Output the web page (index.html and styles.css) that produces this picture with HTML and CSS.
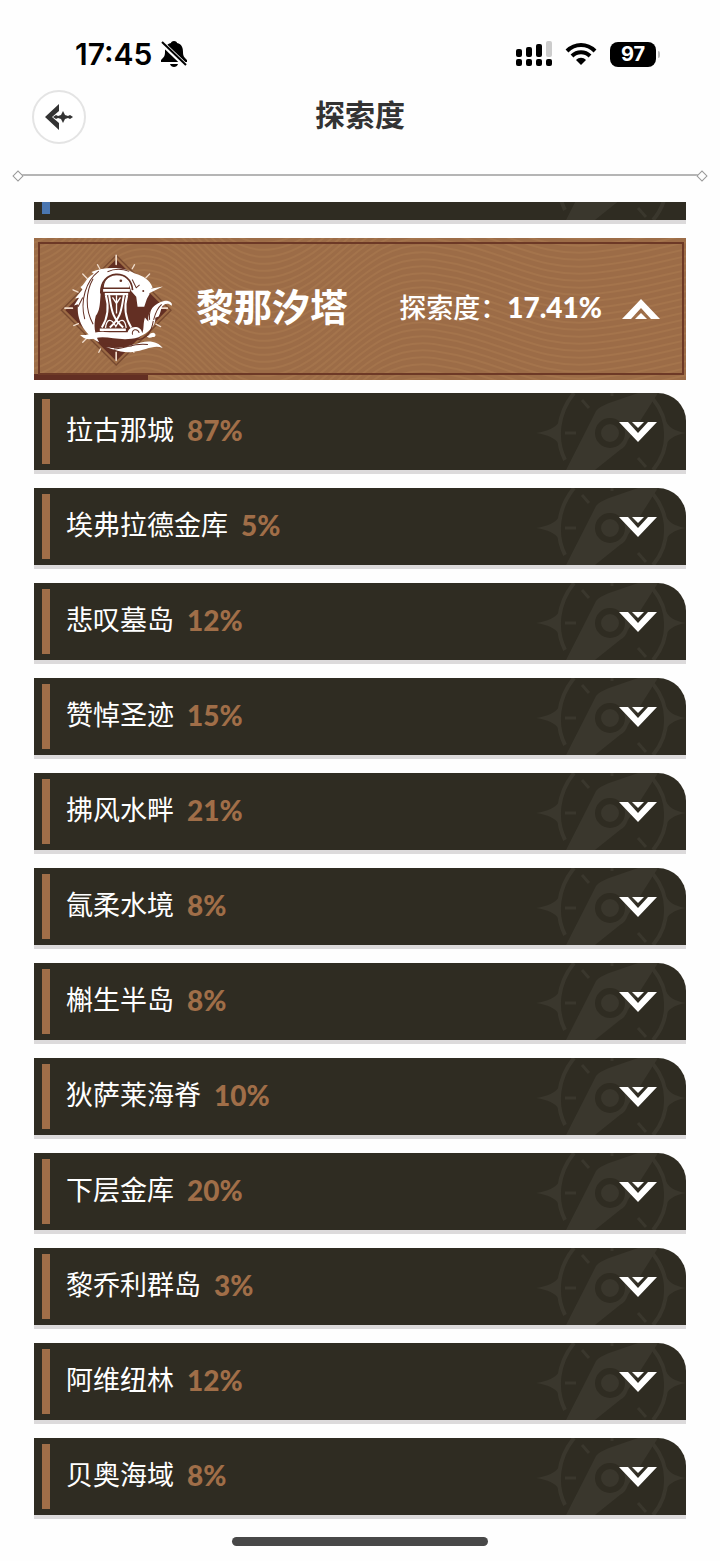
FILE: index.html
```html
<!DOCTYPE html>
<html lang="zh-CN">
<head>
    <meta charset="UTF-8">
    <meta name="viewport" content="width=device-width, initial-scale=1.0">
    <title>探索度</title>
    <link rel="stylesheet" href="styles.css">
</head>
<body>
<!-- shared shapes -->
<svg class="sprite" aria-hidden="true">
    <symbol id="compass" viewBox="0 0 152 77">
        <g fill="none" stroke="#3a372d" stroke-width="4">
            <path d="M31 67C21 47 23 21 40 0M119 77C137 56 136 27 119 6"/>
            <path d="M48 7l7 8M31 40h11M104 65l8 9M78 0v3" stroke-width="3"/>
        </g>
        <path fill="#3a372d" d="M2 40c12-2 19-5 23-11v22C21 45 14 42 2 40zM152 40c-12-2-18-6-22-15v30c4-9 10-13 22-15z"/>
        <path fill="#3a372d" d="M61 20c2-5 7-7 14-10l29-10h20L94 47c-2 5-4 8-8 10L61 77H32z"/>
        <circle cx="76" cy="40" r="12" fill="none" stroke="#2f2c22" stroke-width="6"/>
    </symbol>
    <symbol id="arrow" viewBox="0 0 38 20">
        <path d="M0 0h9l10 11L29 0h9L19 20z"/>
        <path d="M13 0h12l-6 6z"/>
    </symbol>
</svg>

<div class="status-bar">
    <div class="status-left">
        <span class="time">17:45</span>
        <svg width="26" height="28" viewBox="0 0 26 28">
            <path d="M13 1c-2 0-3 1-3 2-5 1-6 5-6 9 0 4-1 5-4 8v2h26v-2c-3-3-4-4-4-8 0-4-1-8-6-9 0-1-1-2-3-2zM9 24h8c-1 4-7 4-8 0z"/>
            <path d="M0 2l25 24" stroke="#fefefe" stroke-width="5"/>
            <path d="M1 2l24 23" stroke="#000" stroke-width="2"/>
        </svg>
    </div>
    <div class="status-right">
        <svg width="36" height="26" viewBox="0 0 36 26">
            <rect x="0" y="8" width="6" height="8" rx="2"/>
            <rect x="10" y="6" width="6" height="10" rx="2"/>
            <rect x="20" y="3" width="6" height="13" rx="2"/>
            <rect x="30" y="0" width="6" height="16" rx="2" fill="#ccc"/>
            <rect x="0" y="18" width="6" height="7" rx="2"/>
            <rect x="10" y="18" width="6" height="7" rx="2"/>
            <rect x="20" y="18" width="6" height="7" rx="2"/>
            <rect x="30" y="18" width="6" height="7" rx="2"/>
        </svg>
        <svg width="32" height="24" viewBox="0 0 32 24">
            <g fill="none" stroke="#000" stroke-width="4">
                <path d="M2 9c8-8 20-8 28 0"/>
                <path d="M7 14c5-5 13-5 18 0"/>
            </g>
            <path d="M11 18c3-3 7-3 10 0l-5 5z"/>
        </svg>
        <span class="battery">97</span>
    </div>
</div>

<header class="page-header">
    <button class="back" type="button" aria-label="返回">
        <svg width="28" height="28" viewBox="0 0 28 28">
            <path d="M14 1v7l-7 6 7 6v7L0 14z"/>
            <path d="M8 14l3-2 2 1 3-1 2-4 2 4 3 1 2-1 3 2-3 2-2-1-3 1-2 4-2-4-3-1-2 1z"/>
        </svg>
    </button>
    <h1>探索度</h1>
</header>

<div class="divider"></div>

<main class="list">
    <div class="clip">
        <div class="area area-blue"><svg class="compass"><use href="#compass"/></svg></div>
    </div>

    <button class="region" type="button">
        <!-- contour lines -->
        <svg class="contours" viewBox="0 0 652 142" preserveAspectRatio="none">
            <defs>
                <path id="c1" d="M-10 0C50-10 60-80 110-80S180 0 240-10 330-100 400-90 500-50 560-56 630-70 670-76"/>
                <g id="c4"><use href="#c1"/><use href="#c1" y="7"/><use href="#c1" y="14"/><use href="#c1" y="21"/></g>
                <g id="c16"><use href="#c4"/><use href="#c4" y="28"/><use href="#c4" y="56"/><use href="#c4" y="84"/></g>
            </defs>
            <use href="#c16" y="-28"/><use href="#c16" y="84"/><use href="#c16" y="196"/>
        </svg>
        <svg class="emblem" viewBox="110 185 350 350">
            <path d="M287 198l164 164-164 164-164-164z" fill="#9c6b45" stroke="#784a30" stroke-width="4"/>
            <path d="M287 210l152 152-152 152-152-152z" fill="#632f23"/>
            <g stroke="#f0dccb" stroke-width="5" stroke-linecap="round">
                <path d="M287 198v27M287 488v24M134 356h22M418 356h22"/>
                <path d="M231 226l7 12M342 226l-7 12M187 254l13 13M387 254l-11 11M158 301l15 7M160 408l14-6M187 458l12-12M235 488l5-10M340 488l-6-11M406 404l14 7" stroke-width="4"/>
            </g>
            <g fill="#fff">
                <path d="M236 458c-46-24-69-71-63-114l-12 4 15-23-12 2 22-27-6-7c14-8 14-26 40-40l-7-5c38-17 95-17 130 4 26 7 45 20 53 42l-12 10 3 10-8 14-8 24h-20l-4-30-16-18c-7-34-28-50-51-45-28 4-39 29-40 61-2 26-2 43-14 59-7 28-4 54 10 79z"/>
                <path d="M378 300l49-9-43 21z"/>
                <path d="M250 294c0-49 76-49 76 0z"/>
                <path d="M248 299h80v8h-80zM253 311h70v6h-70zM238 417h78v7h-78zM232 428h92v12h-92z"/>
                <path d="M322 438c-8-28 39-37 43-7 6-16 2-28 8-47l10 12c-3-33 21-57 50-62 18 0 23 8 20 15-10-10-20-7-26 0-8 8-5 19-13 32l-10 4c3 24-23 47-50 58-52 16-93-7-130 3-22 7-37-1-45-10 28 4 43-12 73-9 25 2 48 16 70 4z"/>
                <path d="M249 470c50 17 99-13 134-14 20 0 34 7 43 19-27-11-52 8-89 12-41 4-63-11-88-17z"/>
                <path d="M378 440c9 0 9-12 22-10 10 5 2 15-4 12-6 3-11 4-18-2z"/>
            </g>
            <g fill="none" stroke="#fff" stroke-width="6">
                <path d="M256 317c10 35 8 65-12 97M266 317c8 42 6 65 42 97M320 317c-10 35-8 65 12 97M310 317c-8 42-6 65-42 97"/>
                <path d="M255 415c4-29 18-29 31-4 13-25 27-25 31 4M276 324l12 18 12-18M288 317v55" stroke-width="4"/>
            </g>
            <g fill="none" stroke="#632f23" stroke-width="3">
                <path d="M235 245c-38 29-57 88-42 144M218 268c-22 38-25 91 0 136M326 246c-23-9-46-8-65 1M335 270l12 25 10-9M187 324l-14 28M356 430c-5-16-25-10-20 5M343 451c39 0 50-27 55-57M401 344c-17 17-16 33-14 47M423 345c-14 12-19 27-24 46M250 463c39 0 49 12 84 6M280 478c36 0 60-20 102-13"/>
                <path d="M241 312c-3-72 91-77 95-10" stroke-width="5"/>
            </g>
            <circle cx="301" cy="274" r="4" fill="#632f23"/>
            <circle cx="368" cy="305" r="3" fill="#632f23"/>
        </svg>
        <span class="region-name">黎那汐塔</span>
        <span class="region-rate">探索度：<b>17.41%</b></span>
        <svg class="arrow arrow-up"><use href="#arrow"/></svg>
        <span class="progress" style="width: 17.41%"></span>
    </button>

    <button class="area" type="button"><svg class="compass"><use href="#compass"/></svg><span>拉古那城</span><b>87%</b><svg class="arrow"><use href="#arrow"/></svg></button>
    <button class="area" type="button"><svg class="compass"><use href="#compass"/></svg><span>埃弗拉德金库</span><b>5%</b><svg class="arrow"><use href="#arrow"/></svg></button>
    <button class="area" type="button"><svg class="compass"><use href="#compass"/></svg><span>悲叹墓岛</span><b>12%</b><svg class="arrow"><use href="#arrow"/></svg></button>
    <button class="area" type="button"><svg class="compass"><use href="#compass"/></svg><span>赞悼圣迹</span><b>15%</b><svg class="arrow"><use href="#arrow"/></svg></button>
    <button class="area" type="button"><svg class="compass"><use href="#compass"/></svg><span>拂风水畔</span><b>21%</b><svg class="arrow"><use href="#arrow"/></svg></button>
    <button class="area" type="button"><svg class="compass"><use href="#compass"/></svg><span>氤柔水境</span><b>8%</b><svg class="arrow"><use href="#arrow"/></svg></button>
    <button class="area" type="button"><svg class="compass"><use href="#compass"/></svg><span>槲生半岛</span><b>8%</b><svg class="arrow"><use href="#arrow"/></svg></button>
    <button class="area" type="button"><svg class="compass"><use href="#compass"/></svg><span>狄萨莱海脊</span><b>10%</b><svg class="arrow"><use href="#arrow"/></svg></button>
    <button class="area" type="button"><svg class="compass"><use href="#compass"/></svg><span>下层金库</span><b>20%</b><svg class="arrow"><use href="#arrow"/></svg></button>
    <button class="area" type="button"><svg class="compass"><use href="#compass"/></svg><span>黎乔利群岛</span><b>3%</b><svg class="arrow"><use href="#arrow"/></svg></button>
    <button class="area" type="button"><svg class="compass"><use href="#compass"/></svg><span>阿维纽林</span><b>12%</b><svg class="arrow"><use href="#arrow"/></svg></button>
    <button class="area" type="button"><svg class="compass"><use href="#compass"/></svg><span>贝奥海域</span><b>8%</b><svg class="arrow"><use href="#arrow"/></svg></button>
</main>

<div class="home-bar"></div>
</body>
</html>
```

FILE: styles.css
```css
* {
    box-sizing: border-box;
}

body {
    margin: 0;
    background: #fefefe;
    color: #333;
    font-family: Lato, "Noto Sans CJK SC", sans-serif;
}

button {
    border: 0;
    padding: 0;
    font: inherit;
    text-align: left;
    cursor: pointer;
}

.sprite {
    position: absolute;
    width: 0;
    height: 0;
}

/* status bar */
.status-bar {
    display: flex;
    justify-content: space-between;
    align-items: center;
    padding: 36px 64px 0 75px;
    color: #000;
    font-family: Inter, sans-serif;
}

.status-left {
    display: flex;
    align-items: center;
    gap: 9px;
}

.time {
    font-size: 30px;
    line-height: 36px;
    font-weight: 600;
}

.status-right {
    display: flex;
    align-items: center;
    gap: 13px;
}

.battery {
    position: relative;
    width: 46px;
    border-radius: 8px;
    background: #000;
    color: #fff;
    font-size: 20px;
    line-height: 25px;
    font-weight: 700;
    text-align: center;
}

.battery::after {
    content: "";
    position: absolute;
    right: -4px;
    top: 9px;
    width: 2px;
    height: 7px;
    border-radius: 0 2px 2px 0;
    background: #bbb;
}

/* header */
.page-header {
    display: grid;
    grid-template-columns: 54px 1fr 54px;
    align-items: center;
    padding: 18px 32px 0;
}

.back {
    display: flex;
    align-items: center;
    justify-content: center;
    width: 54px;
    height: 54px;
    border: 2px solid #e4e4e4;
    border-radius: 50%;
    background: #fff;
    fill: #333;
}

.page-header h1 {
    margin: 0;
    padding-bottom: 6px;
    font-size: 30px;
    line-height: 44px;
    font-weight: 700;
    text-align: center;
}

.divider {
    position: relative;
    height: 2px;
    margin: 30px 20px 26px;
    background: #b5b5b5;
}

.divider::before,
.divider::after {
    content: "";
    position: absolute;
    top: -2px;
    left: -6px;
    width: 6px;
    height: 6px;
    border: 1px solid #999;
    background: #fefefe;
    transform: rotate(45deg);
}

.divider::after {
    left: auto;
    right: -6px;
}

/* list */
.list {
    display: flex;
    flex-direction: column;
    gap: 18px;
    padding: 0 34px;
}

.clip {
    display: flex;
    align-items: flex-end;
    height: 22px;
    margin-bottom: -4px;
    overflow: hidden;
    padding-bottom: 4px;
}

.region {
    position: relative;
    display: flex;
    align-items: center;
    height: 142px;
    margin-bottom: -5px;
    padding: 0 26px 0 23px;
    background: #9c6c47;
    color: #fff;
}

.region::after {
    content: "";
    position: absolute;
    inset: 4px 2px 5px 4px;
    border: 2px solid #6d3926;
}

.contours {
    position: absolute;
    inset: 0;
    width: 100%;
    height: 100%;
    fill: none;
    stroke: #a4744c;
    stroke-width: 2;
}

.emblem {
    position: relative;
    width: 117px;
    height: 117px;
}

.region-name {
    position: relative;
    flex: 1;
    margin-left: 22px;
    padding-bottom: 6px;
    font-size: 38px;
    line-height: 56px;
    font-weight: 700;
}

.region-rate {
    position: relative;
    margin-right: 20px;
    padding-bottom: 4px;
    font-size: 27px;
    line-height: 40px;
    font-weight: 500;
}

.region-rate b {
    font-size: 28px;
    font-weight: 900;
}

.progress {
    position: absolute;
    left: 0;
    bottom: 0;
    height: 6px;
    background: #632f23;
}

.area {
    position: relative;
    display: flex;
    flex: 1 0 auto;
    align-items: center;
    height: 77px;
    padding: 0 29px 4px 32px;
    border-radius: 0 28px 0 0;
    background: #2f2c22;
    box-shadow: 0 4px 0 #dcdadb;
    color: #fff;
    font-size: 27px;
    line-height: 40px;
}

.area::before {
    content: "";
    position: absolute;
    left: 8px;
    top: 6px;
    bottom: 6px;
    width: 8px;
    background: #a06e48;
}

.area-blue::before {
    background: #4a76b0;
}

.area span,
.area b {
    position: relative;
}

.area b {
    flex: 1;
    margin-left: 13px;
    color: #a06e48;
    font-size: 28px;
    font-weight: 900;
}

.compass {
    position: absolute;
    right: 0;
    top: 0;
    width: 152px;
    height: 77px;
    border-radius: 0 28px 0 0;
}

.arrow {
    position: relative;
    width: 38px;
    height: 20px;
    fill: #fff;
}

.area .arrow {
    margin-top: 4px;
}

.arrow-up {
    transform: rotate(180deg);
}

.home-bar {
    width: 256px;
    height: 9px;
    margin: 22px auto 15px;
    border-radius: 5px;
    background: #484848;
}
```
